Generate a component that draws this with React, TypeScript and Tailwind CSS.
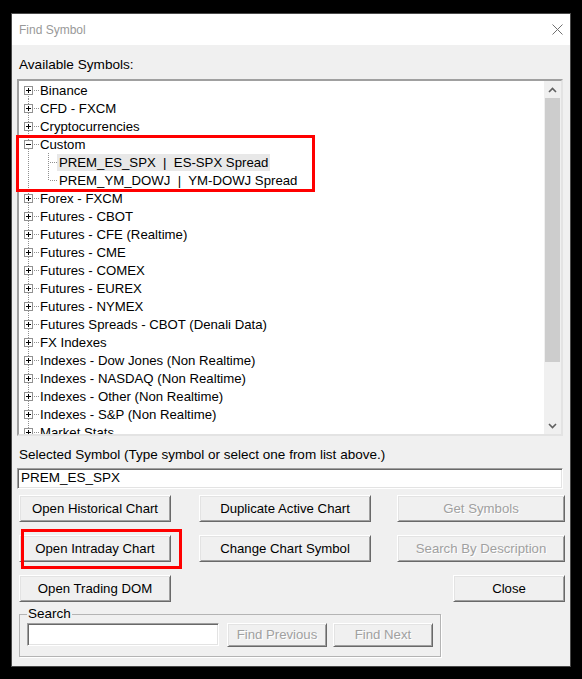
import type { ReactNode } from "react";

type Row = { label: string; kind: "group" | "open" | "child"; selected?: boolean; last?: boolean };

const ROWS: Row[] = [
  { label: "Binance", kind: "group" },
  { label: "CFD - FXCM", kind: "group" },
  { label: "Cryptocurrencies", kind: "group" },
  { label: "Custom", kind: "open" },
  { label: "PREM_ES_SPX  |  ES-SPX Spread", kind: "child", selected: true },
  { label: "PREM_YM_DOWJ  |  YM-DOWJ Spread", kind: "child", last: true },
  { label: "Forex - FXCM", kind: "group" },
  { label: "Futures - CBOT", kind: "group" },
  { label: "Futures - CFE (Realtime)", kind: "group" },
  { label: "Futures - CME", kind: "group" },
  { label: "Futures - COMEX", kind: "group" },
  { label: "Futures - EUREX", kind: "group" },
  { label: "Futures - NYMEX", kind: "group" },
  { label: "Futures Spreads - CBOT (Denali Data)", kind: "group" },
  { label: "FX Indexes", kind: "group" },
  { label: "Indexes - Dow Jones (Non Realtime)", kind: "group" },
  { label: "Indexes - NASDAQ (Non Realtime)", kind: "group" },
  { label: "Indexes - Other (Non Realtime)", kind: "group" },
  { label: "Indexes - S&P (Non Realtime)", kind: "group" },
  { label: "Market Stats", kind: "group" },
];

const DOT = "#8f8f8f";

// dotted tree connectors + expand box for one row
function Connector({ row, first }: { row: Row; first: boolean }) {
  if (row.kind === "child") {
    return (
      <svg width="38" height="18" className="shrink-0" shapeRendering="crispEdges">
        <line x1="9.5" y1="0" x2="9.5" y2="18" stroke={DOT} strokeDasharray="1 1" />
        <line x1="29.5" y1="0" x2="29.5" y2={row.last ? 10 : 18} stroke={DOT} strokeDasharray="1 1" />
        <line x1="31" y1="9.5" x2="38" y2="9.5" stroke={DOT} strokeDasharray="1 1" />
      </svg>
    );
  }
  return (
    <svg width="21" height="18" className="shrink-0" shapeRendering="crispEdges">
      <line x1="9.5" y1={first ? 9 : 0} x2="9.5" y2="18" stroke={DOT} strokeDasharray="1 1" />
      <line x1="15" y1="9.5" x2="21" y2="9.5" stroke={DOT} strokeDasharray="1 1" />
      <rect x="5.5" y="5.5" width="8" height="8" fill="#fff" stroke="#919191" />
      <line x1="7" y1="9.5" x2="12" y2="9.5" stroke="#000" />
      {row.kind === "group" && <line x1="9.5" y1="7" x2="9.5" y2="12" stroke="#000" />}
    </svg>
  );
}

function Chevron({ up }: { up?: boolean }) {
  return (
    <div className="h-[17px] flex items-center justify-center">
      <svg width="9" height="6" viewBox="0 0 9 6">
        <polyline
          points={up ? "1,5 4.5,1.5 8,5" : "1,1 4.5,4.5 8,1"}
          fill="none"
          stroke="#606060"
          strokeWidth="1.6"
        />
      </svg>
    </div>
  );
}

function Btn({ children, className, disabled }: { children: ReactNode; className: string; disabled?: boolean }) {
  return (
    <button
      className={`${className} shrink-0 bg-[#f0f0f0] border border-t-white border-l-white border-r-[#696969] border-b-[#696969] shadow-[inset_1px_1px_0_#e3e3e3,inset_-1px_-1px_0_#a0a0a0] text-[13.2px] leading-[16px] flex items-center justify-center ${
        disabled ? "text-[#a0a0a0] [text-shadow:1px_1px_0_#fff]" : "text-black"
      }`}
    >
      {children}
    </button>
  );
}

const SUNKEN =
  "bg-white border border-t-[#a0a0a0] border-l-[#a0a0a0] border-r-white border-b-white shadow-[inset_1px_1px_0_#696969,inset_-1px_-1px_0_#e3e3e3]";

export default function App() {
  return (
    <div className="relative w-[582px] h-[679px] bg-black pt-[13px] pl-[11px] font-['Liberation_Sans',Arial,sans-serif] text-black">
      <div className="w-[560px] h-[654px] border border-[#4a4a4a] bg-[#f0f0f0] flex flex-col">
        {/* title bar */}
        <div className="h-[31px] bg-white flex items-center justify-between pl-[7px] pr-[7px]">
          <span className="text-[12px] text-[#999999]">Find Symbol</span>
          <svg width="11" height="11" viewBox="0 0 11 11">
            <path d="M0.5 0.5 L10.5 10.5 M10.5 0.5 L0.5 10.5" stroke="#707070" strokeWidth="1" />
          </svg>
        </div>

        <div className="flex flex-col">
          <div className="pt-[12px] pl-[7px] text-[13.6px] leading-[16px]">Available Symbols:</div>

          {/* symbol tree */}
          <div className="mt-[6px] ml-[5px] w-[546px] h-[357px] border-2 border-t-[#a0a0a0] border-l-[#a0a0a0] border-r-[#e3e3e3] border-b-[#e3e3e3] bg-white flex">
            <div className="flex-1 overflow-hidden">
              {ROWS.map((row, i) => (
                <div key={row.label} className="h-[18px] flex items-center">
                  <Connector row={row} first={i === 0} />
                  <span
                    className={`whitespace-pre text-[13.2px] leading-[17px] ${
                      row.kind === "child" ? "px-[2px]" : ""
                    } ${row.selected ? "bg-[#e8e8e8]" : ""}`}
                  >
                    {row.label}
                  </span>
                </div>
              ))}
            </div>
            <div className="w-[17px] bg-[#f0f0f0] flex flex-col">
              <Chevron up />
              <div className="h-[264px] bg-[#cdcdcd] mx-[1px]" />
              <div className="flex-1" />
              <Chevron />
            </div>
          </div>

          <div className="mt-[11px] pl-[7px] text-[13.5px] leading-[16px]">
            Selected Symbol (Type symbol or select one from list above.)
          </div>
          <div className={`mt-[5px] ml-[5px] w-[546px] h-[21px] ${SUNKEN} flex items-center pl-[3px] text-[13.5px]`}>
            PREM_ES_SPX
          </div>

          <div className="mt-[6px] ml-[7px] flex">
            <Btn className="w-[152px] h-[27px]">Open Historical Chart</Btn>
            <Btn className="ml-[28px] w-[172px] h-[27px]">Duplicate Active Chart</Btn>
            <Btn className="ml-[26px] w-[168px] h-[27px]" disabled>Get Symbols</Btn>
          </div>
          <div className="mt-[13px] ml-[7px] flex">
            <Btn className="w-[152px] h-[27px]">Open Intraday Chart</Btn>
            <Btn className="ml-[28px] w-[172px] h-[27px]">Change Chart Symbol</Btn>
            <Btn className="ml-[26px] w-[168px] h-[27px]" disabled>Search By Description</Btn>
          </div>
          <div className="mt-[13px] ml-[7px] flex">
            <Btn className="w-[152px] h-[27px]">Open Trading DOM</Btn>
            <Btn className="ml-[282px] w-[112px] h-[27px]">Close</Btn>
          </div>

          <fieldset className="mt-[5px] ml-[7px] w-[420px] h-[50px] border border-[#b4b4b4] shadow-[1px_1px_0_#fff] px-[7px]">
            <legend className="px-[1px] text-[13.5px] leading-[14px]">Search</legend>
            <div className="mt-[2px] flex">
              <div className={`w-[192px] h-[23px] ${SUNKEN}`} />
              <Btn className="ml-[8px] w-[100px] h-[24px]" disabled>Find Previous</Btn>
              <Btn className="ml-[6px] w-[100px] h-[24px]" disabled>Find Next</Btn>
            </div>
          </fieldset>
        </div>
      </div>

      {/* red highlight frames */}
      <div className="absolute left-[16px] top-[135px] w-[299px] h-[57px] border-[3px] border-[#ff0000]" />
      <div className="absolute left-[21px] top-[529px] w-[161px] h-[40px] border-[3px] border-[#ff0000]" />
    </div>
  );
}
